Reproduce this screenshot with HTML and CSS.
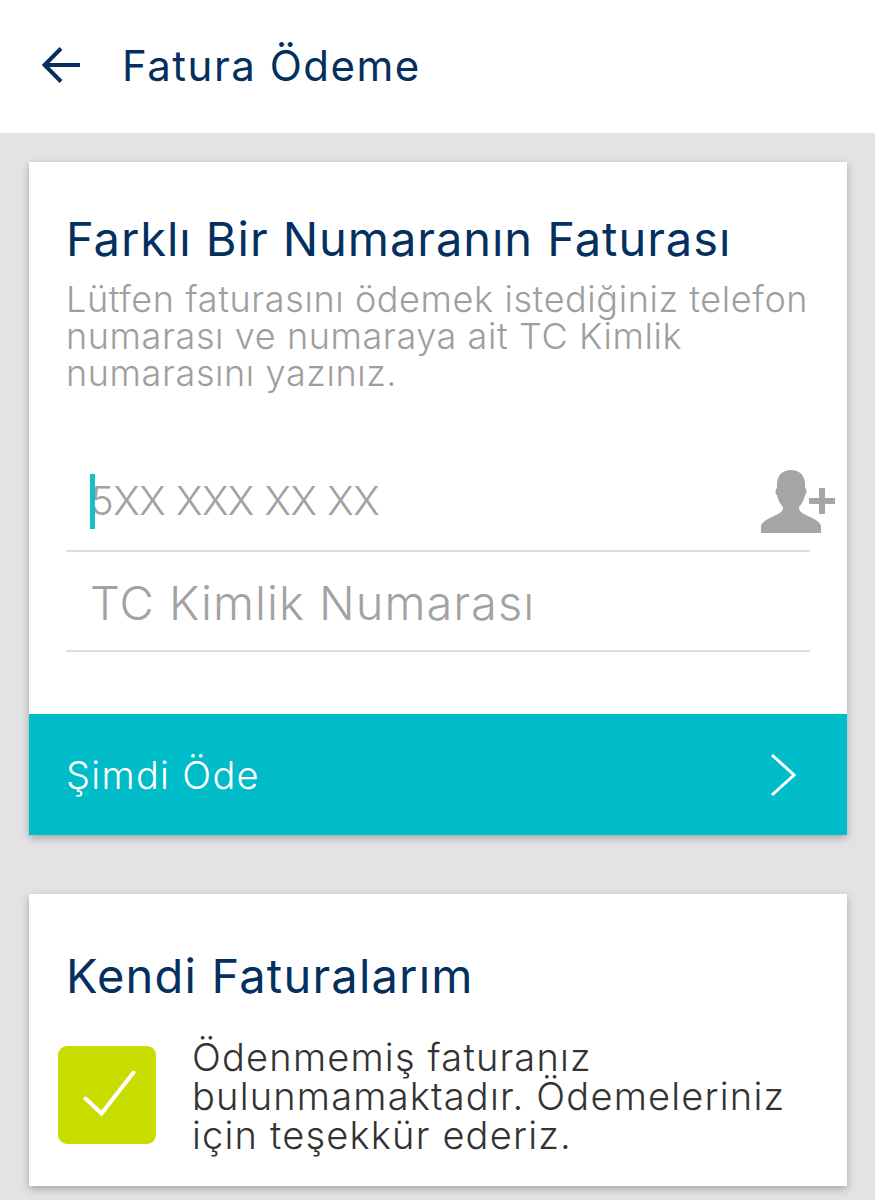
FILE: index.html
```html
<!DOCTYPE html>
<html lang="tr">
<head>
  <meta charset="UTF-8" />
  <meta name="viewport" content="width=device-width, initial-scale=1.0" />
  <title>Fatura Ödeme</title>
  <link rel="stylesheet" href="styles.css">
</head>
<body>
  <header class="topbar">
    <svg class="back-icon" width="40" height="38" viewBox="0 0 40 38">
      <path d="M38 19H3M19 2.5L2.5 19L19 35.5" fill="none" stroke="#03305f" stroke-width="4"/>
    </svg>
    <h1 class="page-title">Fatura Ödeme</h1>
  </header>

  <main class="content">
    <section class="card">
      <div class="card-body">
        <h2 class="card-title">Farklı Bir Numaranın Faturası</h2>
        <p class="card-desc">Lütfen faturasını ödemek istediğiniz telefon numarası ve numaraya ait TC Kimlik numarasını yazınız.</p>
        <div class="field field-phone">
          <span class="caret"></span>
          <span class="placeholder">5XX XXX XX XX</span>
          <svg class="contact-icon" width="76" height="66" viewBox="0 0 76 66">
            <path d="M0 64V57C1 52 9 49 15 46C20 44 22 42 22 38C19 35 17 31 16 26C14 25 14 20 16 19C15 7 21 1 30 1C39 1 45 7 44 19C46 20 46 25 44 26C43 31 41 35 38 38C38 42 40 44 45 46C51 49 59 52 60 57V64Z" fill="#a5a5a5"/>
            <path d="M48 32H74M61 19V45" fill="none" stroke="#a5a5a5" stroke-width="6"/>
          </svg>
        </div>
        <div class="field field-id">
          <span class="placeholder">TC Kimlik Numarası</span>
        </div>
      </div>
      <a class="pay-btn">
        <span>Şimdi Öde</span>
        <svg width="26" height="44" viewBox="0 0 26 44">
          <path d="M2 2L24 22L2 42" fill="none" stroke="#fff" stroke-width="3"/>
        </svg>
      </a>
    </section>

    <section class="card card-own">
      <h2 class="card-title">Kendi Faturalarım</h2>
      <div class="status">
        <div class="status-check">
          <svg width="58" height="50" viewBox="0 0 58 50">
            <path d="M7.5 28.5L23.5 43.5L55.5 2.5" fill="none" stroke="#fff" stroke-width="4" stroke-linecap="round"/>
          </svg>
        </div>
        <p class="status-text">Ödenmemiş faturanız bulunmamaktadır. Ödemeleriniz için teşekkür ederiz.</p>
      </div>
    </section>
  </main>
</body>
</html>
```

FILE: styles.css
```css
body {
  font-family: Inter, sans-serif;
  font-weight: 300;
  margin: 0;
  background: #e3e3e3;
  color: #03305f;
  height: 1200px;
  overflow: hidden;
}
.topbar {
  background: #fff;
  height: 133px;
  display: flex;
  align-items: center;
  padding-left: 42px;
  gap: 40px;
  box-sizing: border-box;
}
.back-icon {
  flex: none;
  margin-bottom: 4px;
}
.page-title {
  font-size: 42px;
  font-weight: 400;
  letter-spacing: 1.5px;
  margin: 0 0 3px;
}
.content {
  padding: 29px 28px 0 29px;
  display: flex;
  flex-direction: column;
  gap: 59px;
}
.card {
  background: #fff;
  box-shadow: 0 3px 8px rgba(0,0,0,0.28);
}
.card-body {
  padding: 49px 37px 62px;
}
.card-title {
  font-size: 47px;
  font-weight: 400;
  line-height: 56px;
  letter-spacing: 0.95px;
  margin: 0;
}
.card-desc {
  font-size: 36px;
  line-height: 37px;
  letter-spacing: 0.6px;
  color: #9e9e9e;
  margin: 14px -10px 0 0;
}
.field {
  position: relative;
  display: flex;
  align-items: center;
  padding-left: 24px;
  border-bottom: 2px solid #dedede;
  color: #a2a2a2;
  width: 720px;
}
.field-phone {
  height: 100px;
  margin-top: 58px;
  font-size: 40px;
  letter-spacing: -0.5px;
}
.field-id {
  height: 96px;
  padding-top: 2px;
  font-size: 47px;
  letter-spacing: 1px;
}
.caret {
  position: absolute;
  left: 24px;
  top: 24px;
  width: 5px;
  height: 55px;
  background: #1cbcc6;
}
.contact-icon {
  position: absolute;
  left: 695px;
  top: 19px;
}
.pay-btn {
  background: #00bcc9;
  color: #fff;
  height: 121px;
  display: flex;
  align-items: center;
  justify-content: space-between;
  padding: 0 51px 0 37px;
  font-size: 38px;
  letter-spacing: 1.3px;
}
.card-own {
  height: 292px;
  box-sizing: border-box;
  padding: 54px 37px 0;
}
.card-own .card-title {
  letter-spacing: 1.2px;
}
.status {
  display: flex;
  gap: 36px;
  margin: 42px 0 0 -8px;
}
.status-check {
  flex: none;
  width: 98px;
  height: 98px;
  background: #c9dc00;
  border-radius: 9px;
  display: flex;
  align-items: center;
  justify-content: center;
}
.status-text {
  font-size: 38px;
  line-height: 39px;
  letter-spacing: 1.2px;
  color: #333;
  margin: -8px 0 0;
}
```
